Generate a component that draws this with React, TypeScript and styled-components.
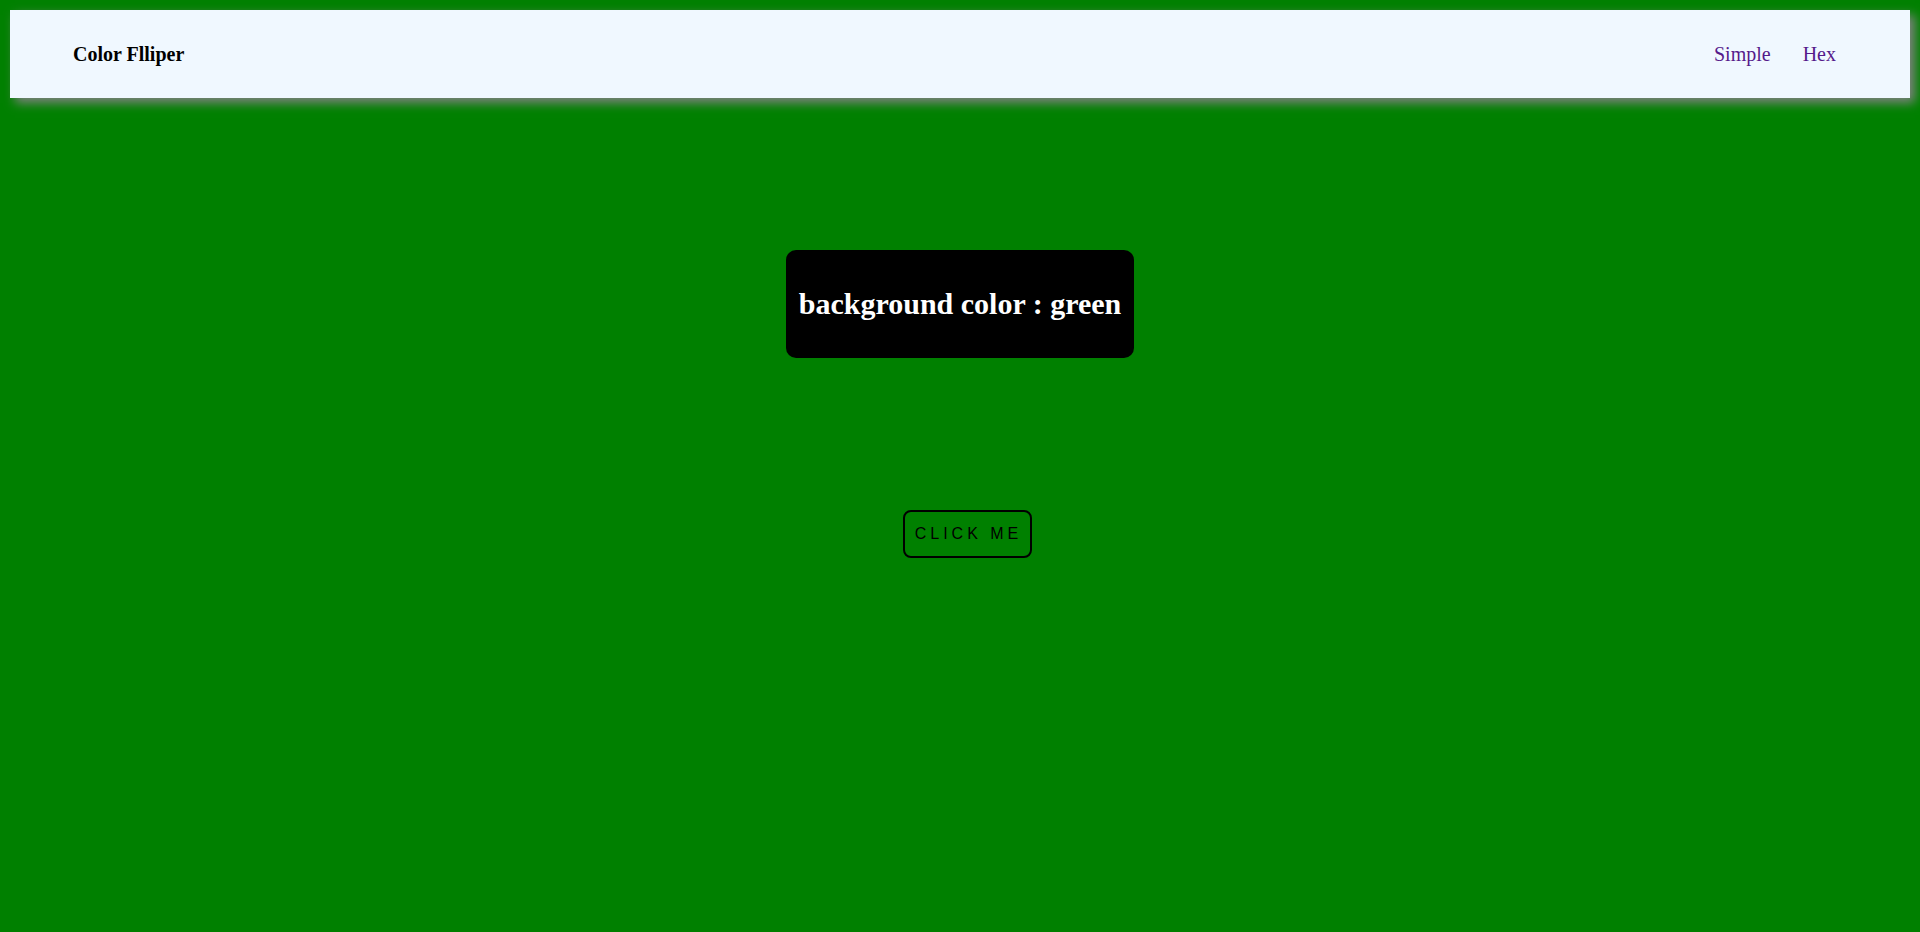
import React from "react";
import styled, { createGlobalStyle } from "styled-components";

const Global = createGlobalStyle`
  html, body {
    margin: 0;
    padding: 0;
    background: #008000;
    min-height: 100%;
  }
  body {
    font-family: "Liberation Serif", "Times New Roman", serif;
  }
`;

const Page = styled.div`
  min-height: 932px;
  box-sizing: border-box;
  padding: 10px;
  background: #008000;
  display: flex;
  flex-direction: column;
  align-items: stretch;
`;

const Navbar = styled.nav`
  height: 88px;
  background: #f0f8ff;
  box-shadow: 5px 5px 10px gray;
  display: flex;
  align-items: center;
  justify-content: space-between;
  padding: 0 74px 0 63px;
  box-sizing: border-box;
`;

const Brand = styled.div`
  font-family: "Liberation Serif", "Times New Roman", serif;
  font-weight: bold;
  font-size: 20px;
  color: #000;
`;

const Links = styled.div`
  display: flex;
  align-items: center;
  gap: 32px;
`;

const NavLink = styled.a`
  font-family: "Liberation Serif", "Times New Roman", serif;
  font-size: 20px;
  color: #551a8b;
  text-decoration: none;
`;

const Main = styled.main`
  display: flex;
  flex-direction: column;
  align-items: center;
  padding-top: 152px;
`;

const ColorBox = styled.div`
  background: #000;
  border-radius: 10px;
  padding: 0 13px;
  display: flex;
  align-items: center;
  justify-content: center;
  height: 108px;
  box-sizing: border-box;
`;

const ColorText = styled.h2`
  margin: 0;
  color: #fff;
  font-family: "Liberation Serif", "Times New Roman", serif;
  font-weight: bold;
  font-size: 30px;
  white-space: nowrap;
`;

const Button = styled.button`
  margin-top: 152px;
  margin-left: 15px;
  height: 48px;
  box-sizing: border-box;
  background: transparent;
  border: 2px solid #000;
  border-radius: 8px;
  padding: 0 8px 0 10px;
  font-family: "Liberation Sans", Arial, sans-serif;
  font-size: 16px;
  line-height: 18px;
  letter-spacing: 4px;
  color: #000;
  cursor: pointer;
`;

export default function App() {
  return (
    <>
      <Global />
      <Page>
        <Navbar>
          <Brand>Color Flliper</Brand>
          <Links>
            <NavLink href="#simple">Simple</NavLink>
            <NavLink href="#hex">Hex</NavLink>
          </Links>
        </Navbar>
        <Main>
          <ColorBox>
            <ColorText>background color : green</ColorText>
          </ColorBox>
          <Button>CLICK ME</Button>
        </Main>
      </Page>
    </>
  );
}
